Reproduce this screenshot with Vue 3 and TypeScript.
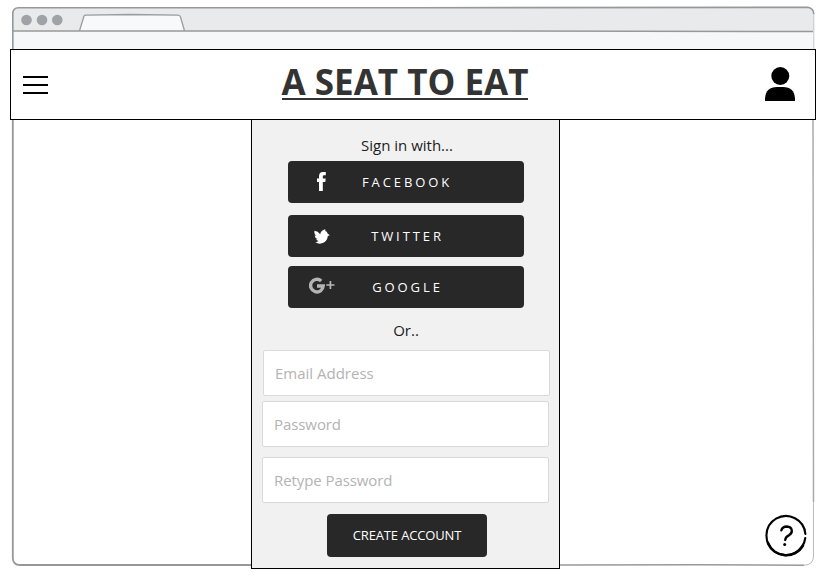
<script setup lang="ts">
import { ref } from 'vue'

interface Provider {
  id: 'facebook' | 'twitter' | 'google'
  label: string
}

interface Field {
  id: string
  type: string
  placeholder: string
}

const providers: Provider[] = [
  { id: 'facebook', label: 'FACEBOOK' },
  { id: 'twitter', label: 'TWITTER' },
  { id: 'google', label: 'GOOGLE' },
]

const fields: Field[] = [
  { id: 'email', type: 'email', placeholder: 'Email Address' },
  { id: 'password', type: 'password', placeholder: 'Password' },
  { id: 'retype', type: 'password', placeholder: 'Retype Password' },
]

const values = ref<Record<string, string>>({ email: '', password: '', retype: '' })
</script>

<template>
  <div class="page">
    <svg class="frame" viewBox="0 0 820 572" width="820" height="572" aria-hidden="true">
      <path d="M12.5 50V13Q12.5 7.5 18 7.5H808Q813.500 8.500 813.500 14V50Z" fill="#f6f7f9" />
      <path d="M12.500 31V13Q12.500 7.500 18 7.500H808Q813.500 8.500 813.500 14V31Z" fill="#e9eaec" />
      <path d="M79.500 31L84 16Q84.500 15.200 86 15.200L130 14.500L178 15.200Q180 15.300 180.500 17L184.500 31Z" fill="#f7f9fa" />
      <path d="M79.500 30.800L84 16Q84.500 15.200 86 15.200L130 14.500L178 15.200Q180 15.300 180.500 17L184.500 30.800" fill="none" stroke="#9a9da0" stroke-width="1.300" />
      <path d="M12 31H500L813 31.500" fill="none" stroke="#96999b" stroke-width="1.500" />
      <path d="M12.800 50V13.500Q13 7.700 18.500 7.700H420L808 7.300Q813.500 8.500 813.800 14" fill="none" stroke="#96999b" stroke-width="1.600" />
      <path d="M813.800 14V50" fill="none" stroke="#c4c6c8" stroke-width="1" />
      <path d="M12.800 118V558Q13 565 20 565H560" fill="none" stroke="#979797" stroke-width="1.800" />
      <path d="M560 565L700 564.800L804 565.200" fill="none" stroke="#999" stroke-width="1.500" />
      <path d="M804 565.200Q813.500 565 813.500 556V500" fill="none" stroke="#bbb" stroke-width="1" />
      <path d="M813 119L813.300 300L813.500 502" fill="none" stroke="#aaa" stroke-width="1.500" />
      <g fill="#9fa3a6">
        <circle cx="26.500" cy="20" r="5.300" />
        <circle cx="42" cy="20" r="5.300" />
        <circle cx="57.300" cy="20" r="5.300" />
      </g>
    </svg>

    <header class="header">
      <button class="icon-button menu" aria-label="Menu">
        <svg width="25" height="18" viewBox="0 0 25 18"><path d="M0 0H25V2H0ZM0 8H25V10H0ZM0 16H25V18H0Z" /></svg>
      </button>
      <h1 class="title">A SEAT TO EAT</h1>
      <button class="icon-button account" aria-label="Account">
        <svg width="30" height="34" viewBox="0 0 30 34"><circle cx="15.300" cy="9" r="9" /><path d="M0 34V31Q1 20 12 20H18Q29 20 30 31V34Z" /></svg>
      </button>
    </header>

    <main class="panel">
      <p class="intro">Sign in with...</p>
      <div class="providers">
        <button v-for="provider in providers" :key="provider.id" class="provider" :class="provider.id">
          <span class="brand">
            <svg v-if="provider.id === 'facebook'" width="9" height="19" viewBox="0 0 9 19">
              <path fill="#fff" d="M2 19V10H0V6.600H2V4.300Q2 0 6 0H8.800V3.300H7Q5.800 3.300 5.800 4.600V6.600H8.700L8.300 10H5.800V19Z" />
            </svg>
            <svg v-else-if="provider.id === 'twitter'" width="16" height="15" viewBox="0 0 16 15">
              <path fill="#fff" d="M.5 1.800Q4 2 6.200 5.200Q7 1.200 11.200.3L11.400 2Q13 2.200 13.600 4.400L15.800 6.200L13.800 7.100Q13.500 11.500 9.900 13.600Q5 16 1.300 12.900Q3.500 13 4.500 12Q2.500 11.500 2.200 10.200L3.500 10Q.8 9 .6 6.600L2.100 7Q-.2 4.800.5 1.800Z" />
            </svg>
            <svg v-else width="26" height="17" viewBox="0 0 26 17">
              <path fill="none" stroke="#b5b5b5" stroke-width="3.400" d="M12.200 4A6.300 6.300 0 1 0 14.200 9H8" />
              <path fill="none" stroke="#b5b5b5" stroke-width="1.700" d="M17.300 8H25.500M21.400 3.900V12.100" />
            </svg>
          </span>
          <span class="provider-label">{{ provider.label }}</span>
        </button>
      </div>
      <p class="divider">Or..</p>
      <form class="form" @submit.prevent>
        <input
          v-for="field in fields"
          :key="field.id"
          v-model="values[field.id]"
          class="field"
          :class="field.id"
          :type="field.type"
          :placeholder="field.placeholder"
        />
        <button class="submit" type="submit">CREATE ACCOUNT</button>
      </form>
    </main>

    <button class="icon-button help" aria-label="Help">
      <svg width="44" height="44" viewBox="0 0 44 44" fill="none" stroke="#000" stroke-linecap="round">
        <path d="M41.400 20A19.500 19.500 0 1 0 41.300 24" stroke-width="2.100" />
        <path d="M4 29A19.500 19.500 0 0 0 39 31.500" stroke-width="2.600" />
        <path d="M17.300 16.300Q18.500 12.500 22.800 12.500C29 12.800 29 19 25.200 21.100Q21.300 23 21.200 26" stroke-width="2.300" />
        <circle cx="20.700" cy="30.500" r="1.500" fill="#000" stroke="none" />
      </svg>
    </button>
  </div>
</template>

<style>
body {
  margin: 0;
  background: #fff;
}
</style>

<style scoped>
.page {
  position: relative;
  box-sizing: border-box;
  width: 820px;
  height: 572px;
  padding: 49px 4px 0 10px;
  overflow: hidden;
  background: #fff;
  color: #1c1c1c;
  font-family: "Open Sans", "Noto Sans", sans-serif;
}

.frame {
  position: absolute;
  inset: 0;
}

button,
input {
  box-sizing: border-box;
  margin: 0;
  font-family: inherit;
}

.icon-button {
  display: block;
  padding: 0;
  border: 0;
  background: none;
  line-height: 0;
}

.header {
  position: relative;
  z-index: 1;
  display: grid;
  grid-template-columns: 60px 1fr 76px;
  box-sizing: border-box;
  height: 71px;
  border: 1px solid #000;
  background: #fff;
}

.menu {
  margin: 26px 0 0 12px;
  justify-self: start;
  align-self: start;
}

.title {
  justify-self: center;
  align-self: start;
  height: 33px;
  margin: 15px 0 0;
  border-bottom: 2px solid #333;
  color: #333;
  font-size: 35px;
  font-weight: 700;
  line-height: 34px;
  white-space: nowrap;
}

.account {
  margin: 17px 20px 0 0;
  justify-self: end;
  align-self: start;
}

.panel {
  position: relative;
  box-sizing: border-box;
  width: 309px;
  height: 450px;
  margin: -1px 0 0 241px;
  border: 1px solid #000;
  background: #f1f1f1;
}

.intro,
.divider {
  margin: 0;
  font-size: 15px;
  line-height: 20px;
  text-align: center;
}

.intro {
  padding: 15px 0 6px;
  margin-left: 3px;
}

.divider {
  padding: 12px 0 10px 1px;
}

.providers {
  display: flex;
  flex-direction: column;
  width: 236px;
  margin-left: 36px;
}

.provider {
  display: flex;
  align-items: center;
  width: 236px;
  height: 42px;
  padding: 0;
  border: 0;
  border-radius: 4px;
  background: #282828;
  color: #fff;
  font-size: 13px;
  letter-spacing: 2.900px;
}

.twitter {
  margin: 12px 0 9px;
}

.brand {
  display: flex;
  justify-content: center;
  width: 67px;
  line-height: 0;
}

.facebook .brand {
  padding-bottom: 2px;
}

.twitter .brand {
  padding-left: 1px;
  width: 66px;
}

.google .brand {
  padding-bottom: 3px;
}

.provider-label {
  width: 105px;
  text-align: center;
}

.facebook .provider-label {
  width: 104px;
}

.form {
  display: flex;
  flex-direction: column;
  align-items: flex-start;
}

.field {
  width: 287px;
  height: 46px;
  margin-left: 10px;
  padding: 0 11px;
  border: 1px solid #dadada;
  border-radius: 2px;
  background: #fff;
  color: #333;
  font-size: 15px;
}

.field::placeholder {
  color: #b3b3b3;
  opacity: 1;
}

.password::placeholder,
.retype::placeholder {
  letter-spacing: -0.080px;
}

.email {
  margin: 0 0 5px 11px;
}

.retype {
  margin-top: 10px;
}

.submit {
  width: 160px;
  height: 43px;
  margin: 11px 0 0 75px;
  padding: 0 0 1px;
  border: 0;
  border-radius: 4px;
  background: #282828;
  color: #fff;
  font-size: 13px;
  letter-spacing: -0.150px;
}

.help {
  position: absolute;
  top: 514px;
  left: 764px;
}
</style>
